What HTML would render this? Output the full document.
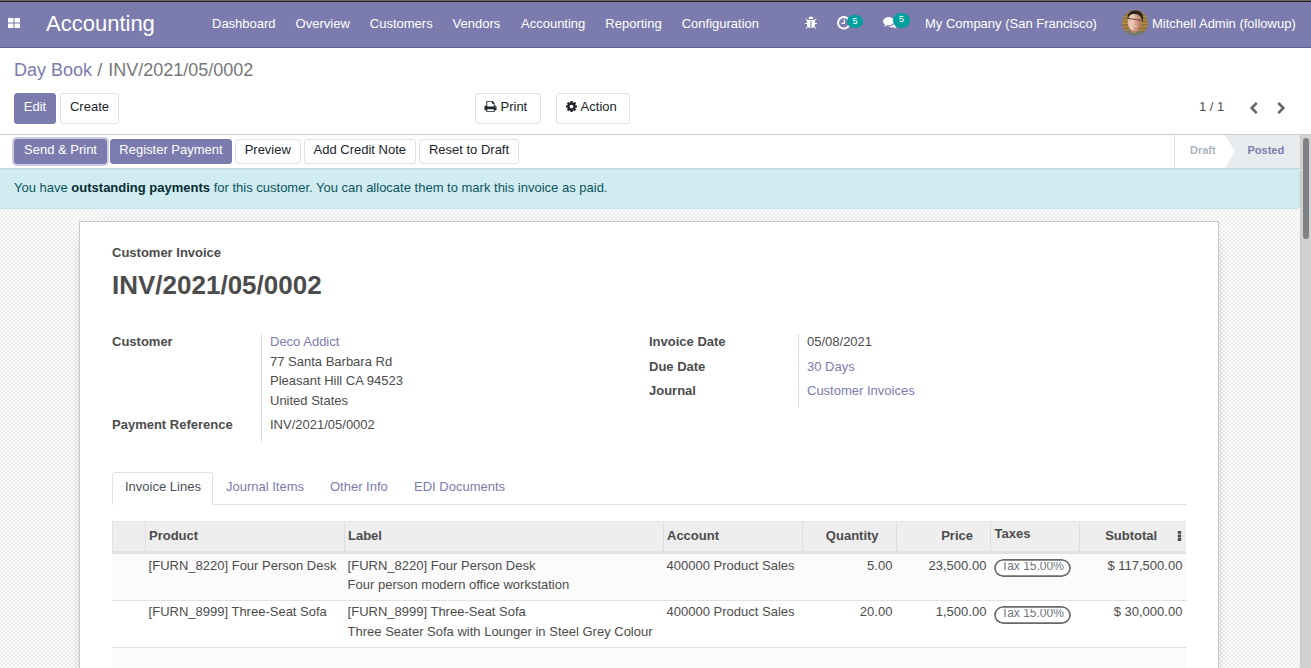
<!DOCTYPE html>
<html lang="en">
<head>
<meta charset="utf-8">
<title>Odoo - INV/2021/05/0002</title>
<style>
*{box-sizing:border-box}
html,body{margin:0;padding:0}
body{width:1311px;height:668px;overflow:hidden;position:relative;background:#fff;
  font-family:"Liberation Sans",sans-serif;font-size:13px;line-height:1.5;color:#4c4c4c}
a{color:#7c7bad;text-decoration:none}
.abs{position:absolute}
svg{display:block}

/* top browser strip */
#strip0{left:0;top:0;width:1311px;height:1px;background:#656565}
#strip1{left:0;top:1px;width:1311px;height:1px;background:#20201e}

/* navbar */
#nav{left:0;top:2px;width:1311px;height:46px;background:#7c7bad;border-bottom:1px solid #5f5e97;color:#fff}
#nav .t{position:absolute;top:12px;line-height:20px;white-space:nowrap;color:#fff}
#brand{position:absolute;left:46px;top:5px;font-size:22px;line-height:33px;color:#fff}
.badge{position:absolute;background:#00a09d;color:#fff;font-size:9.1px;line-height:13px;height:13px;border-radius:7px;text-align:center}

/* control panel */
#cp{left:0;top:48px;width:1311px;height:87px;background:#fff;border-bottom:1px solid #cccccc}
#bc{position:absolute;left:14px;top:9px;font-size:18px;line-height:27px;color:#777;white-space:nowrap}
.btn{position:absolute;height:31px;border:1px solid transparent;border-radius:3px;line-height:19.5px;padding:2.5px 0 0;text-align:center;white-space:nowrap;font-size:13px}
.btn-p{background:#7c7bad;border-color:#7c7bad;color:#fff}
.btn-s{background:#fff;border-color:#dee2e6;color:#212529}

/* statusbar */
#sb{left:0;top:135px;width:1300px;height:34px;background:#fff;border-bottom:1px solid #ced4da}
#sb .btn{top:4px;height:25px;padding:0;line-height:19.5px}

.foc{box-shadow:0 0 0 1.9px rgba(124,123,173,.4)}
.st{top:7px;font-size:11px;font-weight:bold;line-height:17px;white-space:nowrap}
#bc .sep{padding:0 6px 0 5.2px}
/* alert */
#alert{left:-4px;top:169px;width:1304px;height:40px;background:#d1ecf1;border:1px solid #bee5eb;border-radius:3px;color:#0c5460;padding:8px 13px 8px 17px;white-space:nowrap}
#alert b{color:#062c33}

/* background */
#bg{left:0;top:209px;width:1300px;height:459px;background-color:#fff;
  background-image:conic-gradient(#ececec 25%,#fff 0 50%,#ececec 0 75%,#fff 0);
  background-size:4px 4px;background-position:-1px -1px}

/* scrollbar */
#scr{left:1300px;top:135px;width:11px;height:533px;background:#d1d1d1;border-left:1px solid #cdc9c5}
#thumb{left:1303px;top:138px;width:6px;height:101px;background:#7f8284;border-radius:3px}

/* sheet */
#sheet{left:79px;top:221px;width:1140px;height:460px;background:#fff;border:1px solid #c8c8d3;box-shadow:0 5px 20px -15px #000}
.lbl{position:absolute;font-weight:bold;white-space:nowrap;color:#4c4c4c}
.val{position:absolute;white-space:nowrap}
.r{text-align:right}
.tag{position:absolute;width:77px;height:18px;border-radius:9px;color:#6c757d;font-size:12px;text-align:center;overflow:hidden;background:#fff}
.tag span{position:absolute;left:0;width:77px;top:3.4px;height:11px;overflow:hidden}
.tag i{position:absolute;left:0;width:77px;top:-3.4px;line-height:14px;font-style:normal}
</style>
</head>
<body>
<div id="strip0" class="abs"></div>
<div id="strip1" class="abs"></div>

<div id="nav" class="abs">
  <svg class="abs" style="left:8px;top:16px" width="12" height="10" viewBox="0 0 12 10" fill="#fff"><rect x="0" y="0" width="5.5" height="4.6" rx=".6"/><rect x="6.5" y="0" width="5.5" height="4.6" rx=".6"/><rect x="0" y="5.4" width="5.5" height="4.6" rx=".6"/><rect x="6.5" y="5.4" width="5.5" height="4.6" rx=".6"/></svg>
  <div id="brand">Accounting</div>
  <div class="t" style="left:212px">Dashboard</div>
  <div class="t" style="left:295.6px">Overview</div>
  <div class="t" style="left:369.8px">Customers</div>
  <div class="t" style="left:452.6px">Vendors</div>
  <div class="t" style="left:521px">Accounting</div>
  <div class="t" style="left:605.3px">Reporting</div>
  <div class="t" style="left:681.7px">Configuration</div>
  <svg class="abs" style="left:804.2px;top:14px" width="14" height="14" viewBox="0 0 1792 1792" fill="#fff"><path d="M1696 960q0 26-19 45t-45 19h-224q0 171-67 290l208 209q19 19 19 45t-19 45q-18 19-45 19t-45-19l-198-197q-5 5-15 13t-42 28.500-65 36.500-82 29-97 13v-896h-128v896q-51 0-101.500-13.500t-87-33-66-39-43.500-32.500l-15-14-183 207q-20 21-48 21-24 0-43-16-19-18-20.500-44.500t15.500-46.500l202-227q-58-114-58-274h-224q-26 0-45-19t-19-45 19-45 45-19h224v-294l-173-173q-19-19-19-45t19-45 45-19 45 19l173 173h844l173-173q19-19 45-19t45 19 19 45-19 45l-173 173v294h224q26 0 45 19t19 45zm-480-576h-640q0-133 93.500-226.500t226.500-93.500 226.500 93.500 93.500 226.500z"/></svg>
  <svg class="abs" style="left:835.5px;top:12.7px" width="15.6" height="15.6" viewBox="0 0 1792 1792" fill="#fff"><path d="M1024 544v448q0 14-9 23t-23 9h-320q-14 0-23-9t-9-23v-64q0-14 9-23t23-9h224v-352q0-14 9-23t23-9h64q14 0 23 9t9 23zm416 352q0-148-73-273t-198-198-273-73-273 73-198 198-73 273 73 273 198 198 273 73 273-73 198-198 73-273zm224 0q0 209-103 385.500t-279.500 279.500-385.500 103-385.500-103-279.500-279.500-103-385.500 103-385.500 279.500-279.500 385.500-103 385.500 103 279.500 279.500 103 385.500z"/></svg>
  <div class="badge" style="left:847px;top:12.6px;width:16.2px;height:13.2px;line-height:12.2px">5</div>
  <svg class="abs" style="left:882.6px;top:12.8px" width="14.5" height="14.5" viewBox="0 0 1792 1792" fill="#fff"><path d="M1408 768q0 139-94 257t-256.500 186.500-353.500 68.500q-86 0-176-16-124 88-278 128-36 9-86 16h-3q-11 0-20.500-8t-11.500-21q-1-3-1-6.500t.5-6.500 2-6l2.500-5 3.500-5.500 4-5 4.500-5 4-4.500q5-6 23-25t26-29.500 22.500-29 25-38.500 20.500-44q-124-72-195-177t-71-224q0-139 94-257t256.500-186.500 353.500-68.500 353.500 68.500 256.500 186.500 94 257zm384 256q0 120-71 224.500t-195 176.500q10 24 20.500 44t25 38.500 22.500 29 26 29.500 23 25q1 1 4 4.500t4.500 5 4 5 3.500 5.500l2.500 5 2 6 .5 6.500-1 6.500q-3 14-13 22t-22 7q-50-7-86-16-154-40-278-128-90 16-176 16-271 0-472-132 58 4 88 4 161 0 309-45t264-129q125-92 192-212t67-254q0-77-23-152 129 71 204 178t75 230z"/></svg>
  <div class="badge" style="left:893.1px;top:11px;width:16.8px;height:14.7px;line-height:13.5px;border-radius:8px">5</div>
  <svg class="abs" style="left:1122px;top:8px" width="26" height="26" viewBox="0 0 26 26">
    <defs><linearGradient id="avf" x1="0" y1="0" x2="1" y2="0.15"><stop offset="0" stop-color="#d9ab93"/><stop offset=".38" stop-color="#efd0bf"/><stop offset=".7" stop-color="#d49a80"/><stop offset="1" stop-color="#b87a62"/></linearGradient><clipPath id="avc"><circle cx="13" cy="13" r="13"/></clipPath><filter id="avb" x="-10%" y="-10%" width="120%" height="120%"><feGaussianBlur stdDeviation="0.6"/></filter></defs>
    <g clip-path="url(#avc)"><g filter="url(#avb)">
      <rect x="-2" y="-2" width="30" height="30" fill="#8f7138"/>
      <rect x="-2" y="2.2" width="30" height="1.7" fill="#a98a4a"/><rect x="-2" y="5.6" width="30" height="1.7" fill="#ab8c4c"/><rect x="-2" y="9" width="30" height="1.7" fill="#a98a4a"/><rect x="-2" y="12.4" width="30" height="1.7" fill="#ab8c4c"/><rect x="-2" y="15.8" width="30" height="1.7" fill="#a98a4a"/><rect x="-2" y="19.2" width="30" height="1.7" fill="#a5864a"/>
      <path d="M1 27 L2.5 22 Q7 19.5 11 21.5 L17 21 Q22 20.5 23.5 27 Z" fill="#727a73"/>
      <path d="M8.5 18 L9 22.5 Q12 24 15.5 21.8 L16.5 17 Z" fill="#b98468"/>
      <ellipse cx="12.6" cy="11.8" rx="7" ry="9" fill="url(#avf)"/>
      <path d="M5.6 9 Q5 3 9.5 1.2 Q15 -0.8 19.5 2.8 Q22 6 20.6 12.5 L19.4 8 Q17.5 4.2 12 4 Q8 4.2 6.6 7 Z" fill="#2a2521"/>
      <path d="M5.8 8.4 L12 9.3 L19.6 10.6" fill="none" stroke="#54453f" stroke-width=".95"/>
      <path d="M9.6 15.6 Q13 17.6 16.2 16.2 Q13.2 19.2 9.6 15.6 Z" fill="#9c4a44"/>
      <path d="M10.6 16.1 Q13 17.2 15.2 16.4" fill="none" stroke="#f3e4de" stroke-width=".8"/>
    </g></g>
  </svg>
  <div class="t" style="left:925px">My Company (San Francisco)</div>
  <div class="t" style="left:1152px">Mitchell Admin (followup)</div>
</div>

<div id="cp" class="abs">
  <div id="bc"><a>Day Book</a><span class="sep">/</span>INV/2021/05/0002</div>
  <div class="btn btn-p" style="left:14px;top:45px;width:42px">Edit</div>
  <div class="btn btn-s" style="left:60px;top:45px;width:59px">Create</div>
  <div class="btn btn-s" style="left:475px;top:45px;width:66px;text-align:left;padding-left:9px">
    <svg class="abs" style="left:8.4px;top:5.8px" width="13" height="13" viewBox="0 0 1792 1792" fill="#212529"><path d="M448 1536h896v-256h-896v256zm0-640h896v-384h-160q-40 0-68-28t-28-68v-160h-640v640zm1152 64q0-26-19-45t-45-19-45 19-19 45 19 45 45 19 45-19 19-45zm128 0v416q0 13-9.500 22.500t-22.500 9.500h-224v160q0 40-28 68t-68 28h-960q-40 0-68-28t-28-68v-160h-224q-13 0-22.500-9.500t-9.500-22.500v-416q0-79 56.500-135.500t135.500-56.500h64v-544q0-40 28-68t68-28h672q40 0 88 20t76 48l152 152q28 28 48 76t20 88v256h64q79 0 135.500 56.500t56.500 135.500z"/></svg><span style="margin-left:15.5px">Print</span></div>
  <div class="btn btn-s" style="left:556px;top:45px;width:74px;text-align:left;padding-left:9px">
    <svg class="abs" style="left:8.4px;top:5.8px" width="13" height="13" viewBox="0 0 1792 1792" fill="#212529"><path d="M1152 896q0-106-75-181t-181-75-181 75-75 181 75 181 181 75 181-75 75-181zm512-109v222q0 12-8 23t-20 13l-185 28q-19 54-39 91 35 50 107 138 10 12 10 25t-9 23q-27 37-99 108t-94 71q-12 0-26-9l-138-108q-44 23-91 38-16 136-29 186-7 28-36 28h-222q-14 0-24.500-8.500t-11.500-21.500l-28-184q-49-16-90-37l-141 107q-10 9-25 9-14 0-25-11-126-114-165-168-7-10-7-23 0-12 8-23 15-21 51-66.500t54-70.500q-27-50-41-99l-183-27q-13-2-21-12.500t-8-23.500v-222q0-12 8-23t19-13l186-28q14-46 39-92-40-57-107-138-10-12-10-24 0-10 9-23 26-36 98.500-107.500t94.500-71.500q13 0 26 10l138 107q44-23 91-38 16-136 29-186 7-28 36-28h222q14 0 24.500 8.500t11.500 21.500l28 184q49 16 90 37l142-107q9-9 24-9 13 0 25 10 129 119 165 170 7 8 7 22 0 12-8 23-15 21-51 66.500t-54 70.500q26 50 41 98l183 28q13 2 21 12.500t8 23.500z"/></svg><span style="margin-left:14.6px">Action</span></div>
  <div class="abs" style="left:1199px;top:49px;line-height:20px;color:#4c4c4c;white-space:nowrap">1 / 1</div>
  <svg class="abs" style="left:1247px;top:53.7px" width="13" height="13" viewBox="0 0 1792 1792" fill="#666"><path d="M1427 301l-531 531 531 531q19 19 19 45t-19 45l-166 166q-19 19-45 19t-45-19l-742-742q-19-19-19-45t19-45l742-742q19-19 45-19t45 19l166 166q19 19 19 45t-19 45z"/></svg>
  <svg class="abs" style="left:1274.9px;top:53.7px" width="13" height="13" viewBox="0 0 1792 1792" fill="#666"><path transform="translate(1792 0) scale(-1 1)" d="M1427 301l-531 531 531 531q19 19 19 45t-19 45l-166 166q-19 19-45 19t-45-19l-742-742q-19-19-19-45t19-45l742-742q19-19 45-19t45 19l166 166q19 19 19 45t-19 45z"/></svg>
</div>

<div id="sb" class="abs">
  <div class="btn btn-p foc" style="left:14px;width:93px">Send &amp; Print</div>
  <div class="btn btn-p" style="left:110px;width:122px">Register Payment</div>
  <div class="btn btn-s" style="left:235px;width:65.5px">Preview</div>
  <div class="btn btn-s" style="left:304px;width:111.5px">Add Credit Note</div>
  <div class="btn btn-s" style="left:419px;width:100px">Reset to Draft</div>
  <div class="abs" style="left:1174px;top:0;width:1px;height:33px;background:#dee2e6"></div>
  <div class="abs" style="left:1225px;top:0;width:75px;height:33px;background:#e9ecef"></div>
  <svg class="abs" style="left:1225px;top:0" width="11" height="33" viewBox="0 0 11 33"><path d="M0 0 L10 16.5 L0 33 Z" fill="#fff"/></svg>
  <div class="abs st" style="left:1190px;color:#adb5bd">Draft</div>
  <div class="abs st" style="left:1247.5px;color:#7c7bad">Posted</div>
</div>
<div id="alert" class="abs">You have <b>outstanding payments</b> for this customer. You can allocate them to mark this invoice as paid.</div>
<div id="bg" class="abs"></div>
<div id="scr" class="abs"></div>
<div id="thumb" class="abs"></div>
<div id="sheet" class="abs">
  <div class="lbl" style="left:32px;top:21px">Customer Invoice</div>
  <div class="lbl" style="left:32px;top:44px;font-size:26px;line-height:39px">INV/2021/05/0002</div>

  <div class="lbl" style="left:32px;top:110px">Customer</div>
  <div class="abs" style="left:181px;top:112px;width:1px;height:108px;background:#ddd"></div>
  <div class="val" style="left:190px;top:110px"><a>Deco Addict</a><br>77 Santa Barbara Rd<br>Pleasant Hill CA 94523<br>United States</div>
  <div class="lbl" style="left:32px;top:193px">Payment Reference</div>
  <div class="val" style="left:190px;top:193px">INV/2021/05/0002</div>

  <div class="lbl" style="left:569px;top:110px">Invoice Date</div>
  <div class="lbl" style="left:569px;top:134.5px">Due Date</div>
  <div class="lbl" style="left:569px;top:159px">Journal</div>
  <div class="abs" style="left:718px;top:112px;width:1px;height:74px;background:#ddd"></div>
  <div class="val" style="left:727px;top:110px">05/08/2021</div>
  <div class="val" style="left:727px;top:134.5px"><a>30 Days</a></div>
  <div class="val" style="left:727px;top:159px"><a>Customer Invoices</a></div>

  <div class="abs" style="left:32px;top:282px;width:1074px;height:1px;background:#dee2e6"></div>
  <div class="abs" style="left:32px;top:250px;width:101px;height:33px;border:1px solid #dee2e6;border-bottom-color:#fff;border-radius:3px 3px 0 0;background:#fff"></div>
  <div class="val" style="left:45px;top:255px;color:#495057">Invoice Lines</div>
  <div class="val" style="left:146px;top:255px"><a>Journal Items</a></div>
  <div class="val" style="left:250px;top:255px"><a>Other Info</a></div>
  <div class="val" style="left:334px;top:255px"><a>EDI Documents</a></div>
  <!-- invoice lines table -->
  <div class="abs" style="left:32px;top:299px;width:1074px;height:30px;background:#eee;border-top:1px solid #dee2e6;border-left:1px solid #dee2e6"></div>
  <div class="abs" style="left:32px;top:329px;width:1074px;height:3px;background:#dee2e6"></div>
  <div class="abs" style="left:65px;top:300px;width:1px;height:29px;background:#ddd"></div>
  <div class="abs" style="left:264px;top:300px;width:1px;height:29px;background:#ddd"></div>
  <div class="abs" style="left:583px;top:300px;width:1px;height:29px;background:#ddd"></div>
  <div class="abs" style="left:722px;top:300px;width:1px;height:29px;background:#ddd"></div>
  <div class="abs" style="left:816px;top:300px;width:1px;height:29px;background:#ddd"></div>
  <div class="abs" style="left:910px;top:300px;width:1px;height:29px;background:#ddd"></div>
  <div class="abs" style="left:999px;top:300px;width:1px;height:29px;background:#ddd"></div>
  <div class="abs" style="left:32px;top:332px;width:1074px;height:46px;background:#fbfbfb"></div>
  <div class="abs" style="left:32px;top:378px;width:1074px;height:1px;background:#dee2e6"></div>
  <div class="abs" style="left:32px;top:425px;width:1074px;height:1px;background:#dee2e6"></div>
  <div class="abs" style="left:32px;top:426px;width:1074px;height:60px;background:#fbfbfb"></div>
  <div class="lbl" style="left:69px;top:304px">Product</div>
  <div class="lbl" style="left:268px;top:304px">Label</div>
  <div class="lbl" style="left:587px;top:304px">Account</div>
  <div class="lbl r" style="left:722px;width:76.60000000000002px;top:304px">Quantity</div>
  <div class="lbl r" style="left:816px;width:77px;top:304px">Price</div>
  <div class="lbl" style="left:914.6px;top:302px">Taxes</div>
  <div class="lbl r" style="left:999px;width:78.20000000000005px;top:304px">Subtotal</div>
  <svg class="abs" style="left:1097px;top:308px" width="5" height="12" viewBox="0 0 5 12" fill="#4c4c4c"><rect x=".8" y=".9" width="3.4" height="2.9" rx=".5"/><rect x=".8" y="4.5" width="3.4" height="2.9" rx=".5"/><rect x=".8" y="8.1" width="3.4" height="2.9" rx=".5"/></svg>
  <div class="val" style="left:68.6px;top:333.5px">[FURN_8220] Four Person Desk</div>
  <div class="val" style="left:267.6px;top:333.5px">[FURN_8220] Four Person Desk<br>Four person modern office workstation</div>
  <div class="val" style="left:586.6px;top:333.5px">400000 Product Sales</div>
  <div class="val r" style="left:722px;width:90.4px;top:333.5px">5.00</div>
  <div class="val r" style="left:816px;width:90.4px;top:333.5px">23,500.00</div>
  <div class="tag" style="left:914px;top:337px"><svg class="abs" style="left:0;top:0" width="77" height="18" viewBox="0 0 77 18"><rect x=".9" y=".9" width="75.2" height="16.2" rx="8.1" fill="#fff" stroke="#696969" stroke-width="1.8"/></svg><span><i>Tax 15.00%</i></span></div>
  <div class="val r" style="left:999px;width:103.4px;top:333.5px">$ 117,500.00</div>
  <div class="val" style="left:68.6px;top:380.3px">[FURN_8999] Three-Seat Sofa</div>
  <div class="val" style="left:267.6px;top:380.3px">[FURN_8999] Three-Seat Sofa<br>Three Seater Sofa with Lounger in Steel Grey Colour</div>
  <div class="val" style="left:586.6px;top:380.3px">400000 Product Sales</div>
  <div class="val r" style="left:722px;width:90.4px;top:380.3px">20.00</div>
  <div class="val r" style="left:816px;width:90.4px;top:380.3px">1,500.00</div>
  <div class="tag" style="left:914px;top:384px"><svg class="abs" style="left:0;top:0" width="77" height="18" viewBox="0 0 77 18"><rect x=".9" y=".9" width="75.2" height="16.2" rx="8.1" fill="#fff" stroke="#696969" stroke-width="1.8"/></svg><span><i>Tax 15.00%</i></span></div>
  <div class="val r" style="left:999px;width:103.4px;top:380.3px">$ 30,000.00</div>
</div>
</body>
</html>
